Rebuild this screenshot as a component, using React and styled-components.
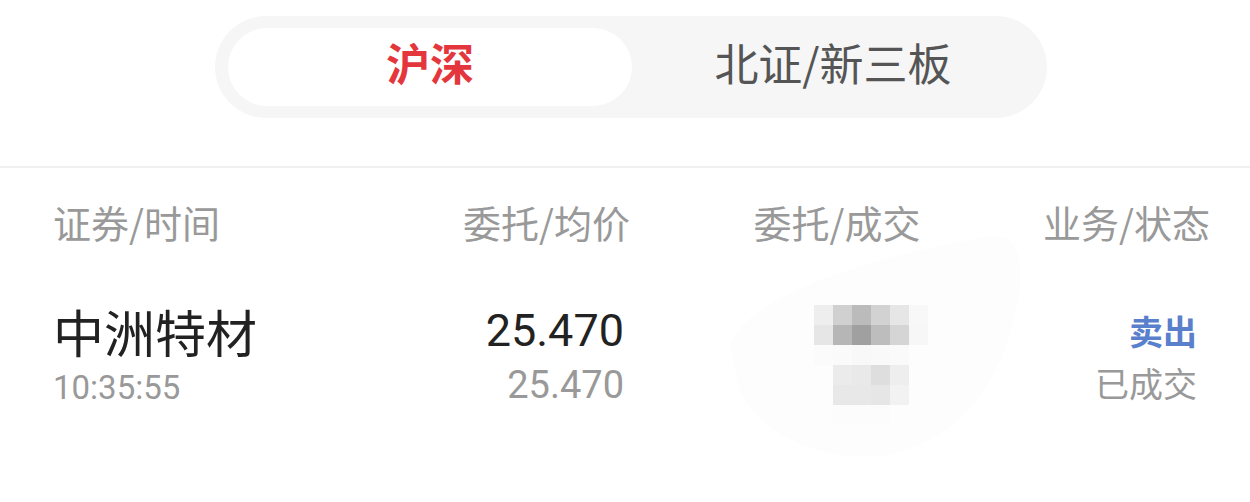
import styled, { createGlobalStyle } from "styled-components"

const Global = createGlobalStyle`
  body {
    margin: 0;
    background: #fff;
    font-family: "Noto Sans CJK SC", "Noto Sans", sans-serif;
  }
`

const Page = styled.div`
  width: 1250px;
  height: 502px;
  background: #fff;
  overflow: hidden;
`

const TabBar = styled.div`
  padding-top: 16px;
  display: flex;
  justify-content: center;
  padding-left: 12px;
`

const Segment = styled.div`
  width: 832px;
  height: 102px;
  box-sizing: border-box;
  padding: 12px 13px;
  border-radius: 51px;
  background: #f6f6f6;
  display: flex;
`

const Tab = styled.div`
  flex: ${({ active }) => (active ? "0 0 404px" : "1")};
  display: flex;
  align-items: center;
  justify-content: center;
  box-sizing: border-box;
  padding-bottom: 10px;
  border-radius: 39px;
  background: ${({ active }) => (active ? "#fff" : "transparent")};
  color: ${({ active }) => (active ? "#e3373d" : "#555")};
  font-size: 44px;
  font-weight: ${({ active }) => (active ? 700 : 400)};
`

const Divider = styled.div`
  margin-top: 48px;
  height: 2px;
  background: #f0f0f0;
`

const Grid = styled.div`
  display: grid;
  grid-template-columns: 277px 300px 414px 166px;
  padding: 0 40px 0 53px;
`

const Head = styled.div`
  height: 116px;
  display: flex;
  align-items: center;
  justify-content: ${({ align }) => align};
  white-space: nowrap;
  color: #999;
  font-size: 38px;
  padding-bottom: 10px;
  box-sizing: border-box;
`

const Cell = styled.div`
  display: flex;
  flex-direction: column;
  align-items: ${({ align }) => align};
  padding-right: ${({ pr }) => pr || 0}px;
  padding-top: 19px;
`

const Name = styled.div`
  font-size: 51px;
  color: #222;
  line-height: 56px;
`

const Time = styled.div`
  font-family: Roboto, "Noto Sans", sans-serif;
  font-size: 33px;
  color: #999;
  line-height: 40px;
  margin-top: 9px;
`

const Price = styled.div`
  font-family: Roboto, "Noto Sans", sans-serif;
  font-size: ${({ sub }) => (sub ? 38 : 45)}px;
  color: ${({ sub }) => (sub ? "#999" : "#222")};
  line-height: ${({ sub }) => (sub ? 44 : 56)}px;
  margin-top: ${({ sub }) => (sub ? 4 : 0)}px;
`

const Side = styled.div`
  font-size: 34px;
  font-weight: 700;
  color: #5a7fcc;
  line-height: 56px;
`

const Status = styled.div`
  font-size: 34px;
  color: #999;
  line-height: 44px;
  margin-top: 2px;
`

const Mosaic = styled.svg`
  display: block;
  margin: -71px 0 0 100px;
`

const blocks = [
  ["#eeeeee", "#d0d0d0", "#bbbbbb", "#d2d2d2", "#e6e6e6", "#f8f8f8"],
  ["#e6e6e6", "#b6b6b6", "#a0a0a0", "#bdbdbd", "#d5d5d5", "#f7f7f7"],
  ["#fbfbfb", "#fafafa", "#f8f8f8", "#f9f9f9", "#fafafa", null],
  [null, "#ebebeb", "#e9e9e9", "#dedede", "#eeeeee", null],
  [null, "#e8e8e8", "#e8e8e8", "#e6e6e6", "#f2f2f2", null],
  [null, "#fcfcfc", "#fcfcfc", "#fcfcfc", null, null],
]

const App = () => {
  return (
    <Page>
      <Global />
      <TabBar>
        <Segment>
          <Tab active>沪深</Tab>
          <Tab>北证/新三板</Tab>
        </Segment>
      </TabBar>
      <Divider />
      <Grid>
        <Head align="flex-start">证券/时间</Head>
        <Head align="flex-end">委托/均价</Head>
        <Head align="center">委托/成交</Head>
        <Head align="flex-end">业务/状态</Head>

        <Cell align="flex-start">
          <Name>中洲特材</Name>
          <Time>10:35:55</Time>
        </Cell>
        <Cell align="flex-end" pr={6}>
          <Price>25.470</Price>
          <Price sub>25.470</Price>
        </Cell>
        <Cell align="flex-start">
          <Mosaic width="290" height="230" viewBox="0 0 290 230">
            <path
              d="M0 112 C20 62 150 22 262 4 C292 0 296 42 285 82 C270 150 230 212 150 224 C90 230 22 200 8 152 Z"
              fill="#fdfdfd"
            />
            <g transform="translate(84 73)">
              {blocks.map((row, r) =>
                row.map((c, i) =>
                  c ? (
                    <rect key={r + "-" + i} x={i * 19} y={r * 20} width="19" height="20" fill={c} />
                  ) : null
                )
              )}
            </g>
          </Mosaic>
        </Cell>
        <Cell align="flex-end" pr={13}>
          <Side>卖出</Side>
          <Status>已成交</Status>
        </Cell>
      </Grid>
    </Page>
  )
}

export default App
